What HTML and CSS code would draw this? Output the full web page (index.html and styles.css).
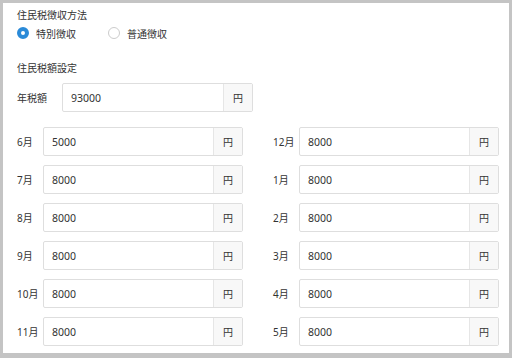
FILE: index.html
```html
<!DOCTYPE html>
<html lang="ja">
<head>
    <meta charset="UTF-8">
    <meta name="viewport" content="width=device-width, initial-scale=1.0">
    <title>住民税設定</title>
    <link rel="stylesheet" href="styles.css">
</head>
<body>
    <div class="panel">
        <!-- Collection method -->
        <div class="section-title">住民税徴収方法</div>
        <div class="radio-row">
            <label class="radio checked"><span class="dot"></span>特別徴収</label>
            <label class="radio"><span class="dot"></span>普通徴収</label>
        </div>

        <!-- Amount settings -->
        <div class="section-title amount-title">住民税額設定</div>
        <div class="year-row">
            <span class="year-label">年税額</span>
            <div class="input-group year-input">
                <span class="value">93000</span>
                <span class="addon">円</span>
            </div>
        </div>

        <div class="month-grid">
            <div class="month"><span class="month-label">6月</span><div class="input-group"><span class="value">5000</span><span class="addon">円</span></div></div>
            <div class="month"><span class="month-label">12月</span><div class="input-group"><span class="value">8000</span><span class="addon">円</span></div></div>
            <div class="month"><span class="month-label">7月</span><div class="input-group"><span class="value">8000</span><span class="addon">円</span></div></div>
            <div class="month"><span class="month-label">1月</span><div class="input-group"><span class="value">8000</span><span class="addon">円</span></div></div>
            <div class="month"><span class="month-label">8月</span><div class="input-group"><span class="value">8000</span><span class="addon">円</span></div></div>
            <div class="month"><span class="month-label">2月</span><div class="input-group"><span class="value">8000</span><span class="addon">円</span></div></div>
            <div class="month"><span class="month-label">9月</span><div class="input-group"><span class="value">8000</span><span class="addon">円</span></div></div>
            <div class="month"><span class="month-label">3月</span><div class="input-group"><span class="value">8000</span><span class="addon">円</span></div></div>
            <div class="month"><span class="month-label">10月</span><div class="input-group"><span class="value">8000</span><span class="addon">円</span></div></div>
            <div class="month"><span class="month-label">4月</span><div class="input-group"><span class="value">8000</span><span class="addon">円</span></div></div>
            <div class="month"><span class="month-label">11月</span><div class="input-group"><span class="value">8000</span><span class="addon">円</span></div></div>
            <div class="month"><span class="month-label">5月</span><div class="input-group"><span class="value">8000</span><span class="addon">円</span></div></div>
        </div>
    </div>
</body>
</html>
```

FILE: styles.css
```css
/* General Styles */
body {
    margin: 0;
    background: #c4c4c4;
    font-family: "Noto Sans", "Noto Sans CJK JP", sans-serif;
    font-size: 10px;
    color: #333;
}

/* White panel inside the gray frame */
.panel {
    margin: 3px 3px 0 3px;
    height: 350px;
    box-sizing: border-box;
    background: #fff;
    padding: 4px 10px 0 14px;
}

.section-title {
    height: 16px;
    line-height: 16px;
}

.amount-title {
    margin-top: 17px;
}

/* Radio buttons */
.radio-row {
    display: flex;
    height: 20px;
    align-items: center;
}

.radio {
    display: flex;
    align-items: center;
    gap: 7px;
    width: 91px;
}

.radio .dot {
    width: 12px;
    height: 12px;
    border: 1px solid #ccc;
    border-radius: 50%;
    box-sizing: border-box;
    background: #fff;
}

.radio.checked .dot {
    border: 4px solid #2a8ad8;
}

/* Year amount */
.year-row {
    display: flex;
    align-items: center;
    margin-top: 7px;
}

.year-label {
    width: 45px;
}

.input-group {
    display: flex;
    height: 29px;
    width: 200px;
    box-sizing: border-box;
    border: 1px solid #dedede;
    border-radius: 2px;
}

.year-input {
    width: 191px;
}

.input-group .value {
    flex: 1;
    display: flex;
    align-items: center;
    padding-left: 8px;
    font-size: 10.5px;
}

.input-group .addon {
    width: 28px;
    display: flex;
    align-items: center;
    justify-content: center;
    background: #f8f8f8;
    border-left: 1px solid #e6e6e6;
}

/* Monthly amounts */
.month-grid {
    display: grid;
    grid-template-columns: 226px 226px;
    column-gap: 30px;
    row-gap: 9px;
    margin-top: 15px;
}

.month {
    display: flex;
    align-items: center;
}

.month-label {
    width: 26px;
}
```
